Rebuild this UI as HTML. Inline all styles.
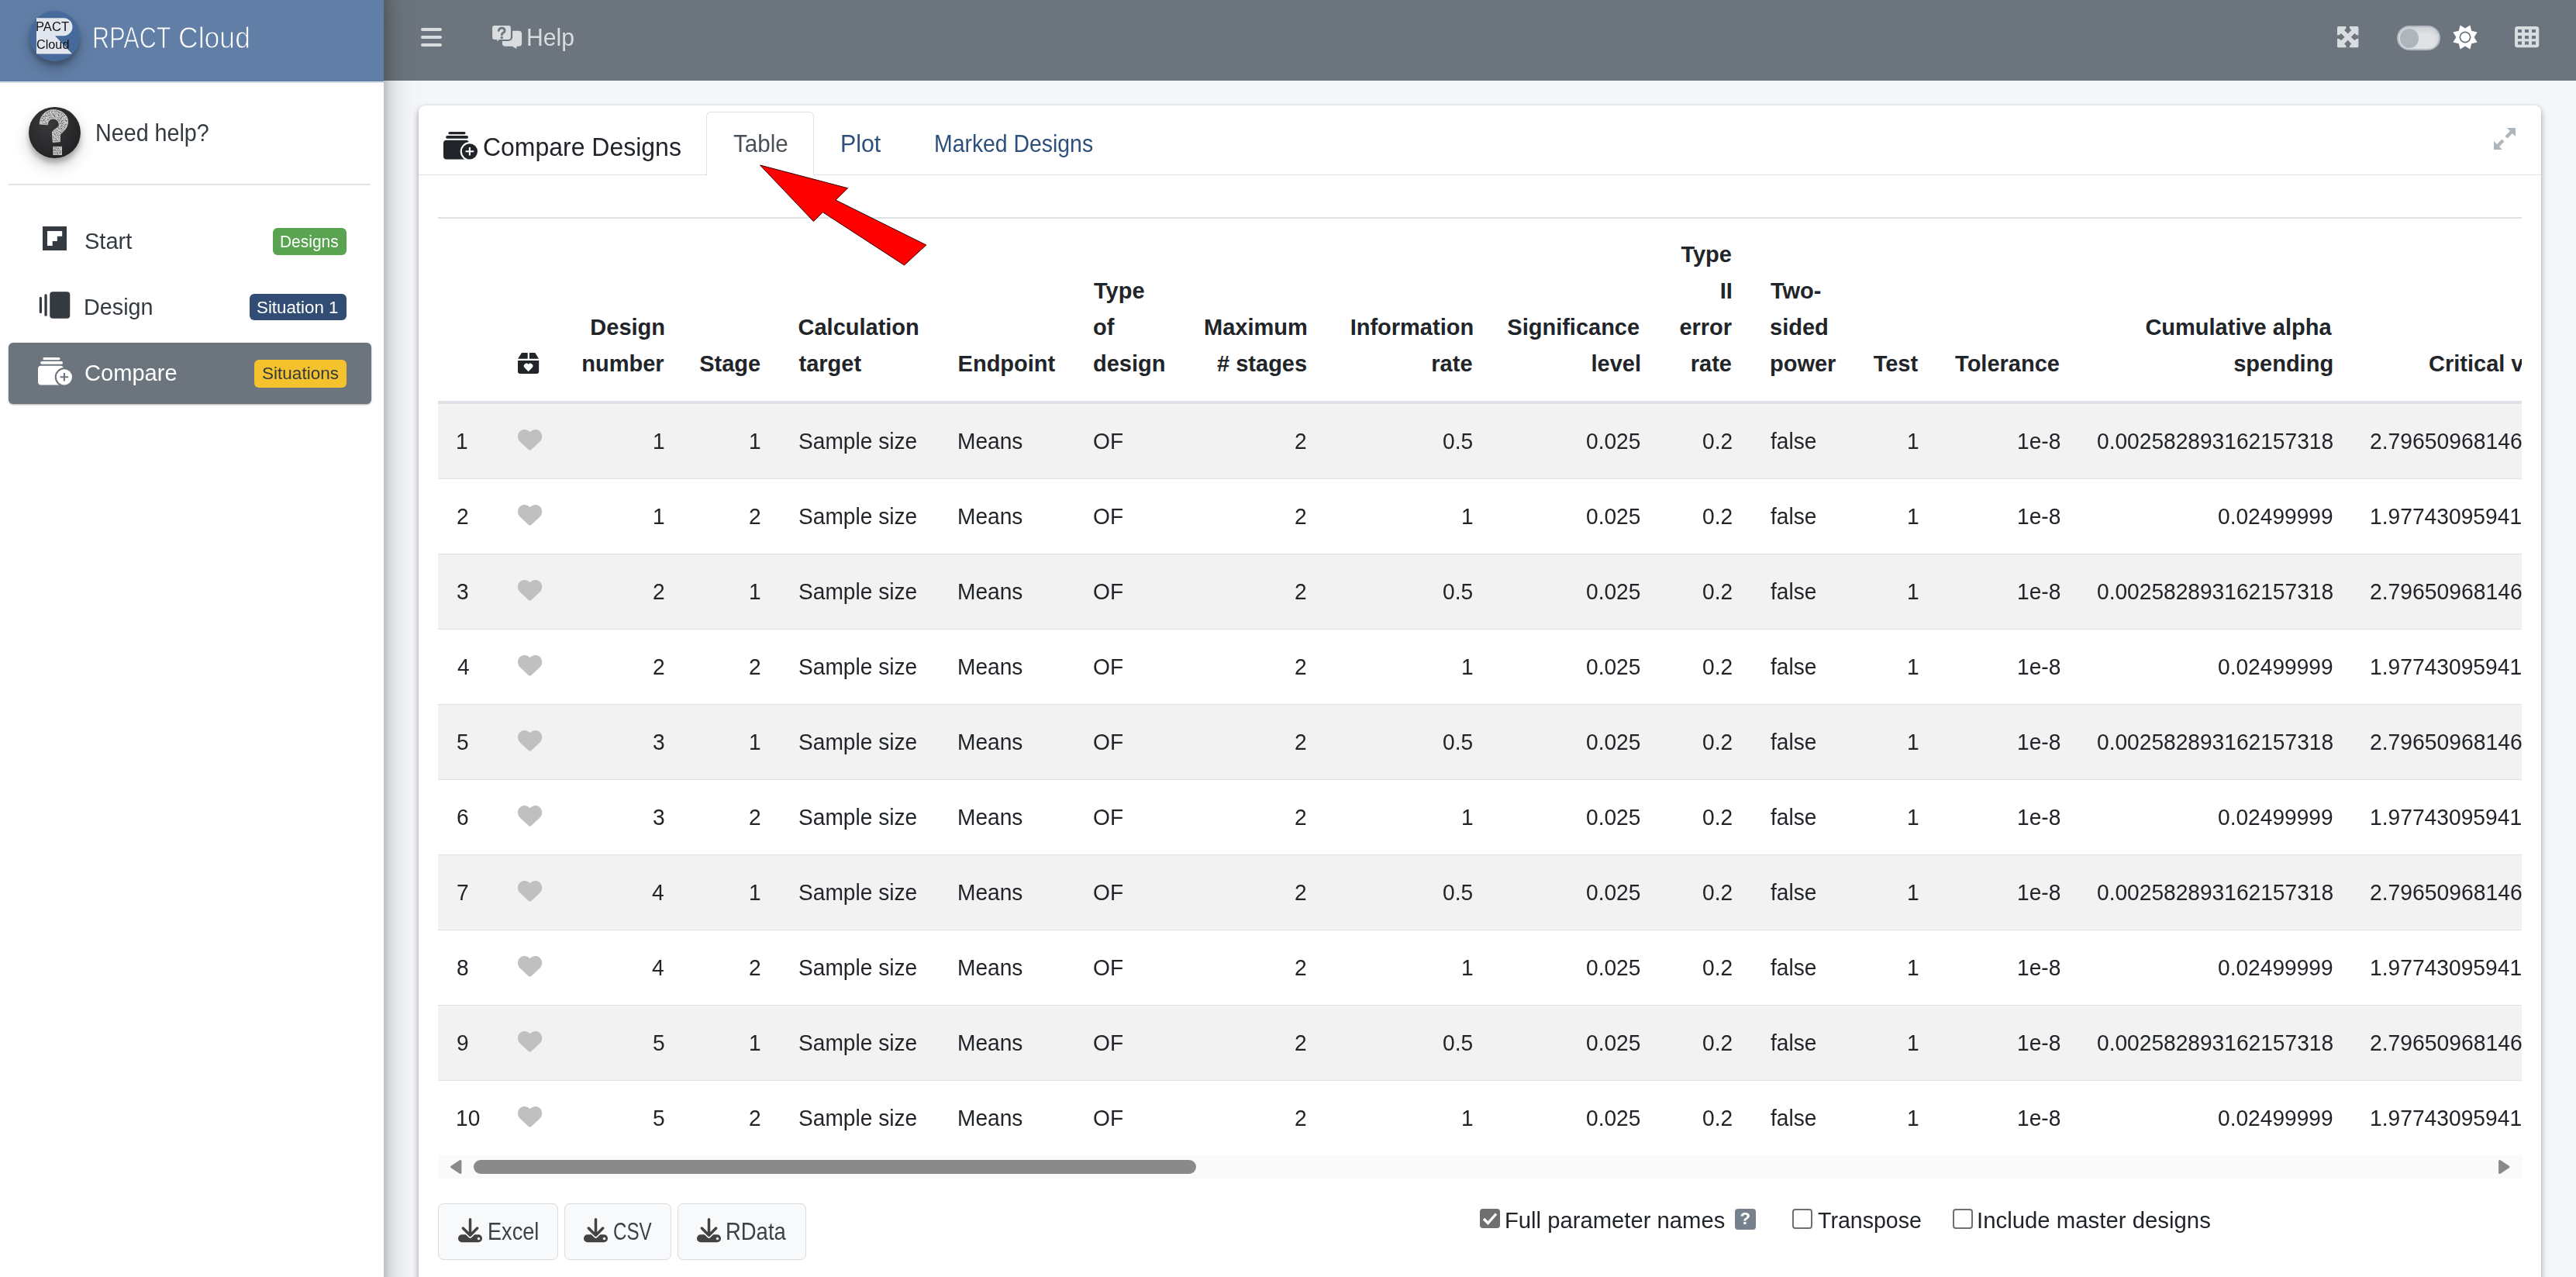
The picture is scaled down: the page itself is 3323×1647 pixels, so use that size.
<!DOCTYPE html>
<html><head><meta charset="utf-8"><title>RPACT Cloud</title>
<style>
html,body{margin:0;padding:0}
body{width:3323px;height:1647px;overflow:hidden;position:relative;background:#f4f6f9;font-family:"Liberation Sans",sans-serif}
.t{position:absolute;white-space:nowrap;line-height:1;transform-origin:0 0}
svg{overflow:visible}
</style></head><body>
<div style="position:absolute;left:495.00px;top:0.00px;width:2828.00px;height:104.00px;background:#6c757d"></div>
<div style="position:absolute;left:543.00px;top:36.00px;width:27.00px;height:4.00px;background:#dadddf;border-radius:2px"></div>
<div style="position:absolute;left:543.00px;top:45.80px;width:27.00px;height:4.00px;background:#dadddf;border-radius:2px"></div>
<div style="position:absolute;left:543.00px;top:55.60px;width:27.00px;height:4.00px;background:#dadddf;border-radius:2px"></div>
<svg style="position:absolute;left:630.00px;top:28.00px;" width="48" height="40" viewBox="0 0 48 40">
<path d="M22.8 11.8 h16.3 a4 4 0 0 1 4 4 v12 a4 4 0 0 1 -4 4 h-2.5 l-0.3 3.2 l-5.6 -3.2 h-8.8 a4 4 0 0 1 -4 -4 v-12 a4 4 0 0 1 4 -4z" fill="#dadddf"/>
<path d="M8 4 h18 a4 4 0 0 1 4 4 v12 a4 4 0 0 1 -4 4 h-11.5 l-4.5 4.3 l0.2 -4.3 h-2.2 a4 4 0 0 1 -4 -4 v-12 a4 4 0 0 1 4 -4z" fill="#dadddf" stroke="#6c757d" stroke-width="2.2"/>
<path d="M13.3 11.6 q0.5 -3.4 4 -3.4 q3.8 0 3.8 3.2 q0 2 -2.4 3.1 q-1.4 0.7 -1.4 2.6" fill="none" stroke="#6c757d" stroke-width="2.7" stroke-linecap="round"/>
<circle cx="17.3" cy="20.6" r="1.7" fill="#6c757d"/>
</svg>
<div class="t" style="left:679.03px;top:33.08px;font-size:30.5px;font-weight:400;color:#dadddf;transform:scaleX(0.9872);">Help</div>
<svg style="position:absolute;left:3015.00px;top:34.00px;" width="28" height="28" viewBox="0 0 28 28">
<rect x="0" y="0" width="27.4" height="27.3" rx="1.5" fill="#dadddf"/>
<g fill="#6c757d">
<polygon points="11.40,-0.20 16.00,-0.20 16.00,2.40 18.30,4.90 13.70,9.60 9.10,4.90 11.40,2.40"/>
<polygon points="27.55,11.35 27.55,15.95 24.95,15.95 22.45,18.25 17.75,13.65 22.45,9.05 24.95,11.35"/>
<polygon points="16.00,27.50 11.40,27.50 11.40,24.90 9.10,22.40 13.70,17.70 18.30,22.40 16.00,24.90"/>
<polygon points="-0.15,15.95 -0.15,11.35 2.45,11.35 4.95,9.05 9.65,13.65 4.95,18.25 2.45,15.95"/>
</g></svg>
<div style="position:absolute;left:3092.00px;top:33.00px;width:55.50px;height:32.00px;box-sizing:border-box;border:2px solid #b3b9bf;border-radius:16px;background:#e0e3e6;box-shadow:inset 0 4px 6px rgba(0,0,0,.09)"></div>
<div style="position:absolute;left:3095.50px;top:37.00px;width:24.50px;height:24.50px;border-radius:50%;background:#adb5bd"></div>
<svg style="position:absolute;left:3163.70px;top:31.70px;" width="32" height="32" viewBox="0 0 32 32"><polygon points="22.43,0.48 24.20,7.80 31.52,9.57 27.60,16.00 31.52,22.43 24.20,24.20 22.43,31.52 16.00,27.60 9.57,31.52 7.80,24.20 0.48,22.43 4.40,16.00 0.48,9.57 7.80,7.80 9.57,0.48 16.00,4.40" fill="#fff"/>
<circle cx="16" cy="16" r="6.6" fill="none" stroke="#6c757d" stroke-width="1.7"/></svg>
<svg style="position:absolute;left:3244.00px;top:34.00px;" width="32" height="28" viewBox="0 0 32 28"><rect x="0" y="0" width="31.3" height="27.3" rx="3.6" fill="#dadddf"/><rect x="4.0" y="4.0" width="5" height="4" fill="#6c757d"/><rect x="4.0" y="12.0" width="5" height="4" fill="#6c757d"/><rect x="4.0" y="19.5" width="5" height="4" fill="#6c757d"/><rect x="13.0" y="4.0" width="5" height="4" fill="#6c757d"/><rect x="13.0" y="12.0" width="5" height="4" fill="#6c757d"/><rect x="13.0" y="19.5" width="5" height="4" fill="#6c757d"/><rect x="22.0" y="4.0" width="5" height="4" fill="#6c757d"/><rect x="22.0" y="12.0" width="5" height="4" fill="#6c757d"/><rect x="22.0" y="19.5" width="5" height="4" fill="#6c757d"/></svg>
<div style="position:absolute;left:0.00px;top:-40.00px;width:495.00px;height:1740.00px;background:#fff;box-shadow:0 21px 42px rgba(0,0,0,.25),0 15px 15px rgba(0,0,0,.22)"></div>
<div style="position:absolute;left:0.00px;top:0.00px;width:495.00px;height:105.00px;background:#617ea7"></div>
<div style="position:absolute;left:0.00px;top:105.00px;width:495.00px;height:1.50px;background:#d9dee5"></div>
<div style="position:absolute;left:37.70px;top:13.50px;width:65.40px;height:65.40px;border-radius:50%;background:#476a9c;box-shadow:0 10px 20px rgba(0,0,0,.19),0 6px 6px rgba(0,0,0,.23)"></div>
<svg style="position:absolute;left:37.70px;top:13.50px;" width="66" height="66" viewBox="0 0 66 66"><path d="M9 9.2 H44 A11.5 11.5 0 0 1 44 32.2 H33 L55 55.5 H9 Z" fill="#e1e5ee"/></svg>
<div class="t" style="left:45.99px;top:26.06px;font-size:16.4px;font-weight:400;color:#111;transform:scaleX(1.0124);">PACT</div>
<div class="t" style="left:47.00px;top:49.36px;font-size:16.4px;font-weight:400;color:#111;transform:scaleX(0.9904);">Cloud</div>
<div class="t" style="left:119.18px;top:29.70px;font-size:38px;font-weight:400;color:#fff;transform:scaleX(0.8065);-webkit-text-stroke:0.9px #617ea7;">RPACT</div>
<div class="t" style="left:230.06px;top:29.70px;font-size:38px;font-weight:400;color:#fff;transform:scaleX(0.9360);-webkit-text-stroke:0.9px #617ea7;">Cloud</div>
<div style="position:absolute;left:37.10px;top:138.10px;width:66.50px;height:66.40px;border-radius:50%;background:radial-gradient(circle at 40% 35%,#3a3a3c,#242426 70%);box-shadow:0 10px 20px rgba(0,0,0,.19),0 6px 6px rgba(0,0,0,.23)"></div>
<svg style="position:absolute;left:37.10px;top:138.10px;" width="66.5" height="66.5" viewBox="0 0 66.5 66.5"><defs><filter id="chalk" x="0" y="0" width="100%" height="100%">
<feTurbulence type="fractalNoise" baseFrequency="0.8" numOctaves="2" seed="3" result="n"/>
<feColorMatrix in="n" type="matrix" values="0 0 0 0 0  0 0 0 0 0  0 0 0 0 0  0 0 0 -2.2 1.9" result="a"/>
<feComposite in="SourceGraphic" in2="a" operator="in"/>
</filter></defs>
<g filter="url(#chalk)" fill="#d4d4d4">
<path d="M14.3 22.1 C14 12 22 3.5 31.6 3.5 C42 3.5 50.6 10 50.6 18.6 C50.6 26 46 31 40.4 35.5 L40.4 44.7 L31.2 45.4 L30.5 32 C34 28 39.3 26 39.3 23.5 C39.3 18 35.5 15.1 31.6 15.1 C27 15.1 24.5 19 24.5 22.8 Z"/>
<rect x="31.9" y="51.4" width="10.6" height="10.2"/></g>
<g fill="none" stroke="#d8d8d8" stroke-width="0.9" opacity="0.9">
<path d="M14.3 22.1 C14 12 22 3.5 31.6 3.5 C42 3.5 50.6 10 50.6 18.6 C50.6 26 46 31 40.4 35.5 L40.4 44.7 L31.2 45.4 L30.5 32 C34 28 39.3 26 39.3 23.5 C39.3 18 35.5 15.1 31.6 15.1 C27 15.1 24.5 19 24.5 22.8 Z"/>
<rect x="31.9" y="51.4" width="10.6" height="10.2"/></g></svg>
<div class="t" style="left:123.12px;top:156.07px;font-size:30.5px;font-weight:400;color:#343a40;transform:scaleX(0.9409);">Need help?</div>
<div style="position:absolute;left:11.00px;top:237.00px;width:467.00px;height:2.00px;background:#e0e3e7"></div>
<svg style="position:absolute;left:55.00px;top:292.00px;" width="31" height="31" viewBox="0 0 31 31"><path d="M0 0H31V31H0Z M6 6 V25 H12.7 V19 H18.8 V12.7 H25.2 V6 Z" fill="#343a40" fill-rule="evenodd"/></svg>
<div class="t" style="left:109.03px;top:295.50px;font-size:30px;font-weight:400;color:#343a40;transform:scaleX(0.9680);">Start</div>
<div style="position:absolute;left:352.00px;top:294.20px;width:94.80px;height:34.50px;background:#5aa350;border-radius:6px"></div>
<div class="t" style="left:361.35px;top:300.60px;font-size:22px;font-weight:400;color:#fff;transform:scaleX(0.9518);">Designs</div>
<svg style="position:absolute;left:50.00px;top:376.00px;" width="41" height="35" viewBox="0 0 41 35"><rect x="14.2" y="0.2" width="26.1" height="34.6" rx="4" fill="#343a40"/>
<rect x="7.4" y="3.3" width="3.3" height="28.5" rx="1.6" fill="#343a40"/>
<rect x="0.8" y="6.8" width="3.2" height="21.4" rx="1.6" fill="#343a40"/></svg>
<div class="t" style="left:108.08px;top:380.50px;font-size:30px;font-weight:400;color:#343a40;transform:scaleX(0.9588);">Design</div>
<div style="position:absolute;left:322.10px;top:379.20px;width:124.70px;height:34.30px;background:#324d74;border-radius:6px"></div>
<div class="t" style="left:331.29px;top:386.00px;font-size:22px;font-weight:400;color:#fff;transform:scaleX(1.0143);">Situation 1</div>
<div style="position:absolute;left:11.00px;top:441.70px;width:468.00px;height:79.30px;background:#6c757d;border-radius:6px;box-shadow:0 1px 3px rgba(0,0,0,.12),0 1px 2px rgba(0,0,0,.24)"></div>
<svg style="position:absolute;left:48.60px;top:460.90px;" width="46" height="37" viewBox="0 0 46 37"><rect x="6.4" y="0" width="22.1" height="3.3" rx="1.6" fill="#fff"/>
<rect x="3.1" y="5.1" width="28.9" height="3.7" rx="1.8" fill="#fff"/>
<path d="M4 10.8 H29 A4 4 0 0 1 33 14.8 V35.4 H4 A4 4 0 0 1 0 31.4 V14.8 A4 4 0 0 1 4 10.8Z" fill="#fff"/>
<circle cx="33.9" cy="25.3" r="12.2" fill="#6c757d"/>
<circle cx="33.9" cy="25.3" r="10.1" fill="#fff"/>
<path d="M33.9 20 V30.6 M28.6 25.3 H39.2" stroke="#6c757d" stroke-width="2.1"/></svg>
<div class="t" style="left:109.03px;top:465.50px;font-size:30px;font-weight:400;color:#fff;transform:scaleX(0.9696);">Compare</div>
<div style="position:absolute;left:327.90px;top:464.20px;width:118.90px;height:35.60px;background:#f3c22d;border-radius:6px"></div>
<div class="t" style="left:337.98px;top:470.90px;font-size:22px;font-weight:400;color:#343a40;transform:scaleX(1.0249);">Situations</div>
<div style="position:absolute;left:540.00px;top:136.00px;width:2738.00px;height:1624.00px;background:#fff;border-radius:8px;box-shadow:0 0 1.5px rgba(0,0,0,.125),0 4.5px 9px rgba(0,0,0,.16),0 4.5px 9px rgba(0,0,0,.2)"></div>
<div style="position:absolute;left:540.00px;top:224.80px;width:2738.00px;height:1.70px;background:#dee2e6"></div>
<svg style="position:absolute;left:572.00px;top:170.10px;" width="46" height="37" viewBox="0 0 46 37"><rect x="6.4" y="0" width="22.1" height="3.3" rx="1.6" fill="#212529"/>
<rect x="3.1" y="5.1" width="28.9" height="3.7" rx="1.8" fill="#212529"/>
<path d="M4 10.8 H29 A4 4 0 0 1 33 14.8 V35.4 H4 A4 4 0 0 1 0 31.4 V14.8 A4 4 0 0 1 4 10.8Z" fill="#212529"/>
<circle cx="33.9" cy="25.3" r="12.2" fill="#fff"/>
<circle cx="33.9" cy="25.3" r="10.1" fill="#212529"/>
<path d="M33.9 20 V30.6 M28.6 25.3 H39.2" stroke="#fff" stroke-width="2.1"/></svg>
<div class="t" style="left:623.06px;top:171.70px;font-size:34px;font-weight:400;color:#212529;transform:scaleX(0.9403);">Compare Designs</div>
<div style="position:absolute;left:911.00px;top:144.20px;width:138.80px;height:82.30px;box-sizing:border-box;border:1.8px solid #dee2e6;border-bottom:none;border-radius:6px 6px 0 0;background:#fff"></div>
<div class="t" style="left:945.50px;top:170.07px;font-size:30.5px;font-weight:400;color:#495057;transform:scaleX(0.9687);">Table</div>
<div class="t" style="left:1083.81px;top:170.17px;font-size:30.5px;font-weight:400;color:#2c4f7c;transform:scaleX(0.9945);">Plot</div>
<div class="t" style="left:1205.04px;top:170.07px;font-size:30.5px;font-weight:400;color:#2c4f7c;transform:scaleX(0.9307);">Marked Designs</div>
<svg style="position:absolute;left:3217.00px;top:164.50px;" width="28" height="28" viewBox="0 0 28 28"><g fill="#adb5bd">
<path d="M28 0 V11 L24 7 L17.5 13.5 L14.5 10.5 L21 4 L17 0Z"/>
<path d="M0 28 V17 L4 21 L10.5 14.5 L13.5 17.5 L7 24 L11 28Z"/></g></svg>
<div style="position:absolute;left:565px;top:270px;width:2687.5px;height:1260px;overflow:hidden">
<div style="position:absolute;left:0.00px;top:9.80px;width:2835.00px;height:1.80px;background:#dee2e6"></div>
<svg style="position:absolute;left:103.00px;top:185.00px;" width="28" height="28" viewBox="0 0 28 28"><g fill="#212529">
<path d="M5 0.1 H12.7 V7.7 H0 Z"/>
<path d="M14.9 0.1 H22.3 L27 7.7 H14.9 Z"/>
<path d="M0 10 H27.2 V14 V14 V14 V24 A3 3 0 0 1 24.2 27 H3 A3 3 0 0 1 0 24 Z"/>
</g>
<path d="M13.6 24.2 L8.5 19 A3 3 0 0 1 13.6 15 A3 3 0 0 1 18.7 19 Z" fill="#fff"/></svg>
<div class="t" style="left:196.33px;top:137.75px;font-size:29px;font-weight:700;color:#212529;">Design</div>
<div class="t" style="left:185.24px;top:184.75px;font-size:29px;font-weight:700;color:#212529;">number</div>
<div class="t" style="left:337.16px;top:184.75px;font-size:29px;font-weight:700;color:#212529;">Stage</div>
<div class="t" style="left:464.50px;top:137.75px;font-size:29px;font-weight:700;color:#212529;">Calculation</div>
<div class="t" style="left:465.50px;top:184.75px;font-size:29px;font-weight:700;color:#212529;">target</div>
<div class="t" style="left:670.60px;top:184.75px;font-size:29px;font-weight:700;color:#212529;">Endpoint</div>
<div class="t" style="left:846.00px;top:90.95px;font-size:29px;font-weight:700;color:#212529;">Type</div>
<div class="t" style="left:845.00px;top:137.75px;font-size:29px;font-weight:700;color:#212529;">of</div>
<div class="t" style="left:845.00px;top:184.75px;font-size:29px;font-weight:700;color:#212529;">design</div>
<div class="t" style="left:988.03px;top:137.75px;font-size:29px;font-weight:700;color:#212529;">Maximum</div>
<div class="t" style="left:1005.06px;top:184.75px;font-size:29px;font-weight:700;color:#212529;"># stages</div>
<div class="t" style="left:1176.63px;top:137.75px;font-size:29px;font-weight:700;color:#212529;">Information</div>
<div class="t" style="left:1281.33px;top:184.75px;font-size:29px;font-weight:700;color:#212529;">rate</div>
<div class="t" style="left:1379.30px;top:137.75px;font-size:29px;font-weight:700;color:#212529;">Significance</div>
<div class="t" style="left:1487.56px;top:184.75px;font-size:29px;font-weight:700;color:#212529;">level</div>
<div class="t" style="left:1603.40px;top:44.15px;font-size:29px;font-weight:700;color:#212529;">Type</div>
<div class="t" style="left:1653.74px;top:90.95px;font-size:29px;font-weight:700;color:#212529;">II</div>
<div class="t" style="left:1601.39px;top:137.75px;font-size:29px;font-weight:700;color:#212529;">error</div>
<div class="t" style="left:1615.73px;top:184.75px;font-size:29px;font-weight:700;color:#212529;">rate</div>
<div class="t" style="left:1719.00px;top:90.95px;font-size:29px;font-weight:700;color:#212529;">Two-</div>
<div class="t" style="left:1718.00px;top:137.75px;font-size:29px;font-weight:700;color:#212529;">sided</div>
<div class="t" style="left:1718.00px;top:184.75px;font-size:29px;font-weight:700;color:#212529;">power</div>
<div class="t" style="left:1851.68px;top:184.75px;font-size:29px;font-weight:700;color:#212529;">Test</div>
<div class="t" style="left:1957.08px;top:184.75px;font-size:29px;font-weight:700;color:#212529;">Tolerance</div>
<div class="t" style="left:2202.41px;top:137.75px;font-size:29px;font-weight:700;color:#212529;">Cumulative alpha</div>
<div class="t" style="left:2316.23px;top:184.75px;font-size:29px;font-weight:700;color:#212529;">spending</div>
<div class="t" style="left:2568.00px;top:184.75px;font-size:29px;font-weight:700;color:#212529;">Critical values</div>
<div style="position:absolute;left:0.00px;top:250.50px;width:2835.00px;height:96.00px;background:#f2f2f2"></div>
<div style="position:absolute;left:0.00px;top:346.50px;width:2835.00px;height:1.00px;background:#dee2e6"></div>
<div class="t" style="left:23.06px;top:284.65px;font-size:29px;font-weight:400;color:#212529;transform:scaleX(0.9700);">1</div>
<svg style="position:absolute;left:103.00px;top:284.40px;" width="32" height="27" viewBox="0 0 32 27"><path transform="translate(0,-2.62) scale(0.0609)" d="M47.6 300.4L228.3 469.1c7.5 7 17.4 10.9 27.7 10.9s20.2-3.9 27.7-10.9L464.4 300.4c30.4-28.3 47.6-68 47.6-109.5v-5.8c0-69.900-50.5-129.5-119.4-141C347 36.5 300.6 51.4 268 84L256 96 244 84c-32.6-32.600-79-47.5-124.600-39.900C50.5 55.600 0 115.200 0 185.100v5.800c0 41.500 17.200 81.200 47.600 109.500z" fill="#c0c0c0"/></svg>
<div class="t" style="left:277.05px;top:284.65px;font-size:29px;font-weight:400;color:#212529;transform:scaleX(0.9700);">1</div>
<div class="t" style="left:401.25px;top:284.65px;font-size:29px;font-weight:400;color:#212529;transform:scaleX(0.9700);">1</div>
<div class="t" style="left:464.53px;top:284.65px;font-size:29px;font-weight:400;color:#212529;transform:scaleX(0.9700);">Sample size</div>
<div class="t" style="left:669.66px;top:284.65px;font-size:29px;font-weight:400;color:#212529;transform:scaleX(0.9700);">Means</div>
<div class="t" style="left:845.03px;top:284.65px;font-size:29px;font-weight:400;color:#212529;transform:scaleX(0.9700);">OF</div>
<div class="t" style="left:1105.45px;top:284.65px;font-size:29px;font-weight:400;color:#212529;transform:scaleX(0.9700);">2</div>
<div class="t" style="left:1296.39px;top:284.65px;font-size:29px;font-weight:400;color:#212529;transform:scaleX(0.9700);">0.5</div>
<div class="t" style="left:1480.90px;top:284.65px;font-size:29px;font-weight:400;color:#212529;transform:scaleX(0.9700);">0.025</div>
<div class="t" style="left:1630.79px;top:284.65px;font-size:29px;font-weight:400;color:#212529;transform:scaleX(0.9700);">0.2</div>
<div class="t" style="left:1719.00px;top:284.65px;font-size:29px;font-weight:400;color:#212529;transform:scaleX(0.9700);">false</div>
<div class="t" style="left:1894.95px;top:284.65px;font-size:29px;font-weight:400;color:#212529;transform:scaleX(0.9700);">1</div>
<div class="t" style="left:2036.59px;top:284.65px;font-size:29px;font-weight:400;color:#212529;transform:scaleX(0.9700);">1e-8</div>
<div class="t" style="left:2139.53px;top:284.65px;font-size:29px;font-weight:400;color:#212529;transform:scaleX(0.9700);">0.002582893162157318</div>
<div class="t" style="left:2491.62px;top:284.65px;font-size:29px;font-weight:400;color:#212529;transform:scaleX(0.9756);">2.79650968146</div>
<div style="position:absolute;left:0.00px;top:443.50px;width:2835.00px;height:1.00px;background:#dee2e6"></div>
<div class="t" style="left:24.03px;top:381.65px;font-size:29px;font-weight:400;color:#212529;transform:scaleX(0.9700);">2</div>
<svg style="position:absolute;left:103.00px;top:381.40px;" width="32" height="27" viewBox="0 0 32 27"><path transform="translate(0,-2.62) scale(0.0609)" d="M47.6 300.4L228.3 469.1c7.5 7 17.4 10.9 27.7 10.9s20.2-3.9 27.7-10.9L464.4 300.4c30.4-28.3 47.6-68 47.6-109.5v-5.8c0-69.900-50.5-129.5-119.4-141C347 36.5 300.6 51.4 268 84L256 96 244 84c-32.6-32.600-79-47.5-124.600-39.900C50.5 55.600 0 115.200 0 185.100v5.800c0 41.500 17.200 81.200 47.600 109.500z" fill="#c0c0c0"/></svg>
<div class="t" style="left:277.05px;top:381.65px;font-size:29px;font-weight:400;color:#212529;transform:scaleX(0.9700);">1</div>
<div class="t" style="left:401.25px;top:381.65px;font-size:29px;font-weight:400;color:#212529;transform:scaleX(0.9700);">2</div>
<div class="t" style="left:464.53px;top:381.65px;font-size:29px;font-weight:400;color:#212529;transform:scaleX(0.9700);">Sample size</div>
<div class="t" style="left:669.66px;top:381.65px;font-size:29px;font-weight:400;color:#212529;transform:scaleX(0.9700);">Means</div>
<div class="t" style="left:845.03px;top:381.65px;font-size:29px;font-weight:400;color:#212529;transform:scaleX(0.9700);">OF</div>
<div class="t" style="left:1105.45px;top:381.65px;font-size:29px;font-weight:400;color:#212529;transform:scaleX(0.9700);">2</div>
<div class="t" style="left:1319.85px;top:381.65px;font-size:29px;font-weight:400;color:#212529;transform:scaleX(0.9700);">1</div>
<div class="t" style="left:1480.90px;top:381.65px;font-size:29px;font-weight:400;color:#212529;transform:scaleX(0.9700);">0.025</div>
<div class="t" style="left:1630.79px;top:381.65px;font-size:29px;font-weight:400;color:#212529;transform:scaleX(0.9700);">0.2</div>
<div class="t" style="left:1719.00px;top:381.65px;font-size:29px;font-weight:400;color:#212529;transform:scaleX(0.9700);">false</div>
<div class="t" style="left:1894.95px;top:381.65px;font-size:29px;font-weight:400;color:#212529;transform:scaleX(0.9700);">1</div>
<div class="t" style="left:2036.59px;top:381.65px;font-size:29px;font-weight:400;color:#212529;transform:scaleX(0.9700);">1e-8</div>
<div class="t" style="left:2295.98px;top:381.65px;font-size:29px;font-weight:400;color:#212529;transform:scaleX(0.9700);">0.02499999</div>
<div class="t" style="left:2491.95px;top:381.65px;font-size:29px;font-weight:400;color:#212529;transform:scaleX(0.9729);">1.97743095941</div>
<div style="position:absolute;left:0.00px;top:444.50px;width:2835.00px;height:96.00px;background:#f2f2f2"></div>
<div style="position:absolute;left:0.00px;top:540.50px;width:2835.00px;height:1.00px;background:#dee2e6"></div>
<div class="t" style="left:24.03px;top:478.65px;font-size:29px;font-weight:400;color:#212529;transform:scaleX(0.9700);">3</div>
<svg style="position:absolute;left:103.00px;top:478.40px;" width="32" height="27" viewBox="0 0 32 27"><path transform="translate(0,-2.62) scale(0.0609)" d="M47.6 300.4L228.3 469.1c7.5 7 17.4 10.9 27.7 10.9s20.2-3.9 27.7-10.9L464.4 300.4c30.4-28.3 47.6-68 47.6-109.5v-5.8c0-69.900-50.5-129.5-119.4-141C347 36.5 300.6 51.4 268 84L256 96 244 84c-32.6-32.600-79-47.5-124.600-39.900C50.5 55.600 0 115.200 0 185.100v5.800c0 41.500 17.200 81.200 47.600 109.500z" fill="#c0c0c0"/></svg>
<div class="t" style="left:277.05px;top:478.65px;font-size:29px;font-weight:400;color:#212529;transform:scaleX(0.9700);">2</div>
<div class="t" style="left:401.25px;top:478.65px;font-size:29px;font-weight:400;color:#212529;transform:scaleX(0.9700);">1</div>
<div class="t" style="left:464.53px;top:478.65px;font-size:29px;font-weight:400;color:#212529;transform:scaleX(0.9700);">Sample size</div>
<div class="t" style="left:669.66px;top:478.65px;font-size:29px;font-weight:400;color:#212529;transform:scaleX(0.9700);">Means</div>
<div class="t" style="left:845.03px;top:478.65px;font-size:29px;font-weight:400;color:#212529;transform:scaleX(0.9700);">OF</div>
<div class="t" style="left:1105.45px;top:478.65px;font-size:29px;font-weight:400;color:#212529;transform:scaleX(0.9700);">2</div>
<div class="t" style="left:1296.39px;top:478.65px;font-size:29px;font-weight:400;color:#212529;transform:scaleX(0.9700);">0.5</div>
<div class="t" style="left:1480.90px;top:478.65px;font-size:29px;font-weight:400;color:#212529;transform:scaleX(0.9700);">0.025</div>
<div class="t" style="left:1630.79px;top:478.65px;font-size:29px;font-weight:400;color:#212529;transform:scaleX(0.9700);">0.2</div>
<div class="t" style="left:1719.00px;top:478.65px;font-size:29px;font-weight:400;color:#212529;transform:scaleX(0.9700);">false</div>
<div class="t" style="left:1894.95px;top:478.65px;font-size:29px;font-weight:400;color:#212529;transform:scaleX(0.9700);">1</div>
<div class="t" style="left:2036.59px;top:478.65px;font-size:29px;font-weight:400;color:#212529;transform:scaleX(0.9700);">1e-8</div>
<div class="t" style="left:2139.53px;top:478.65px;font-size:29px;font-weight:400;color:#212529;transform:scaleX(0.9700);">0.002582893162157318</div>
<div class="t" style="left:2491.62px;top:478.65px;font-size:29px;font-weight:400;color:#212529;transform:scaleX(0.9756);">2.79650968146</div>
<div style="position:absolute;left:0.00px;top:637.50px;width:2835.00px;height:1.00px;background:#dee2e6"></div>
<div class="t" style="left:25.00px;top:575.65px;font-size:29px;font-weight:400;color:#212529;transform:scaleX(0.9700);">4</div>
<svg style="position:absolute;left:103.00px;top:575.40px;" width="32" height="27" viewBox="0 0 32 27"><path transform="translate(0,-2.62) scale(0.0609)" d="M47.6 300.4L228.3 469.1c7.5 7 17.4 10.9 27.7 10.9s20.2-3.9 27.7-10.9L464.4 300.4c30.4-28.3 47.6-68 47.6-109.5v-5.8c0-69.900-50.5-129.5-119.4-141C347 36.5 300.6 51.4 268 84L256 96 244 84c-32.6-32.600-79-47.5-124.600-39.900C50.5 55.600 0 115.200 0 185.100v5.800c0 41.500 17.200 81.200 47.600 109.500z" fill="#c0c0c0"/></svg>
<div class="t" style="left:277.05px;top:575.65px;font-size:29px;font-weight:400;color:#212529;transform:scaleX(0.9700);">2</div>
<div class="t" style="left:401.25px;top:575.65px;font-size:29px;font-weight:400;color:#212529;transform:scaleX(0.9700);">2</div>
<div class="t" style="left:464.53px;top:575.65px;font-size:29px;font-weight:400;color:#212529;transform:scaleX(0.9700);">Sample size</div>
<div class="t" style="left:669.66px;top:575.65px;font-size:29px;font-weight:400;color:#212529;transform:scaleX(0.9700);">Means</div>
<div class="t" style="left:845.03px;top:575.65px;font-size:29px;font-weight:400;color:#212529;transform:scaleX(0.9700);">OF</div>
<div class="t" style="left:1105.45px;top:575.65px;font-size:29px;font-weight:400;color:#212529;transform:scaleX(0.9700);">2</div>
<div class="t" style="left:1319.85px;top:575.65px;font-size:29px;font-weight:400;color:#212529;transform:scaleX(0.9700);">1</div>
<div class="t" style="left:1480.90px;top:575.65px;font-size:29px;font-weight:400;color:#212529;transform:scaleX(0.9700);">0.025</div>
<div class="t" style="left:1630.79px;top:575.65px;font-size:29px;font-weight:400;color:#212529;transform:scaleX(0.9700);">0.2</div>
<div class="t" style="left:1719.00px;top:575.65px;font-size:29px;font-weight:400;color:#212529;transform:scaleX(0.9700);">false</div>
<div class="t" style="left:1894.95px;top:575.65px;font-size:29px;font-weight:400;color:#212529;transform:scaleX(0.9700);">1</div>
<div class="t" style="left:2036.59px;top:575.65px;font-size:29px;font-weight:400;color:#212529;transform:scaleX(0.9700);">1e-8</div>
<div class="t" style="left:2295.98px;top:575.65px;font-size:29px;font-weight:400;color:#212529;transform:scaleX(0.9700);">0.02499999</div>
<div class="t" style="left:2491.95px;top:575.65px;font-size:29px;font-weight:400;color:#212529;transform:scaleX(0.9729);">1.97743095941</div>
<div style="position:absolute;left:0.00px;top:638.50px;width:2835.00px;height:96.00px;background:#f2f2f2"></div>
<div style="position:absolute;left:0.00px;top:734.50px;width:2835.00px;height:1.00px;background:#dee2e6"></div>
<div class="t" style="left:24.03px;top:672.65px;font-size:29px;font-weight:400;color:#212529;transform:scaleX(0.9700);">5</div>
<svg style="position:absolute;left:103.00px;top:672.40px;" width="32" height="27" viewBox="0 0 32 27"><path transform="translate(0,-2.62) scale(0.0609)" d="M47.6 300.4L228.3 469.1c7.5 7 17.4 10.9 27.7 10.9s20.2-3.9 27.7-10.9L464.4 300.4c30.4-28.3 47.6-68 47.6-109.5v-5.8c0-69.900-50.5-129.5-119.4-141C347 36.5 300.6 51.4 268 84L256 96 244 84c-32.6-32.600-79-47.5-124.600-39.900C50.5 55.600 0 115.200 0 185.100v5.800c0 41.500 17.200 81.200 47.600 109.500z" fill="#c0c0c0"/></svg>
<div class="t" style="left:277.05px;top:672.65px;font-size:29px;font-weight:400;color:#212529;transform:scaleX(0.9700);">3</div>
<div class="t" style="left:401.25px;top:672.65px;font-size:29px;font-weight:400;color:#212529;transform:scaleX(0.9700);">1</div>
<div class="t" style="left:464.53px;top:672.65px;font-size:29px;font-weight:400;color:#212529;transform:scaleX(0.9700);">Sample size</div>
<div class="t" style="left:669.66px;top:672.65px;font-size:29px;font-weight:400;color:#212529;transform:scaleX(0.9700);">Means</div>
<div class="t" style="left:845.03px;top:672.65px;font-size:29px;font-weight:400;color:#212529;transform:scaleX(0.9700);">OF</div>
<div class="t" style="left:1105.45px;top:672.65px;font-size:29px;font-weight:400;color:#212529;transform:scaleX(0.9700);">2</div>
<div class="t" style="left:1296.39px;top:672.65px;font-size:29px;font-weight:400;color:#212529;transform:scaleX(0.9700);">0.5</div>
<div class="t" style="left:1480.90px;top:672.65px;font-size:29px;font-weight:400;color:#212529;transform:scaleX(0.9700);">0.025</div>
<div class="t" style="left:1630.79px;top:672.65px;font-size:29px;font-weight:400;color:#212529;transform:scaleX(0.9700);">0.2</div>
<div class="t" style="left:1719.00px;top:672.65px;font-size:29px;font-weight:400;color:#212529;transform:scaleX(0.9700);">false</div>
<div class="t" style="left:1894.95px;top:672.65px;font-size:29px;font-weight:400;color:#212529;transform:scaleX(0.9700);">1</div>
<div class="t" style="left:2036.59px;top:672.65px;font-size:29px;font-weight:400;color:#212529;transform:scaleX(0.9700);">1e-8</div>
<div class="t" style="left:2139.53px;top:672.65px;font-size:29px;font-weight:400;color:#212529;transform:scaleX(0.9700);">0.002582893162157318</div>
<div class="t" style="left:2491.62px;top:672.65px;font-size:29px;font-weight:400;color:#212529;transform:scaleX(0.9756);">2.79650968146</div>
<div style="position:absolute;left:0.00px;top:831.50px;width:2835.00px;height:1.00px;background:#dee2e6"></div>
<div class="t" style="left:24.03px;top:769.65px;font-size:29px;font-weight:400;color:#212529;transform:scaleX(0.9700);">6</div>
<svg style="position:absolute;left:103.00px;top:769.40px;" width="32" height="27" viewBox="0 0 32 27"><path transform="translate(0,-2.62) scale(0.0609)" d="M47.6 300.4L228.3 469.1c7.5 7 17.4 10.9 27.7 10.9s20.2-3.9 27.7-10.9L464.4 300.4c30.4-28.3 47.6-68 47.6-109.5v-5.8c0-69.900-50.5-129.5-119.4-141C347 36.5 300.6 51.4 268 84L256 96 244 84c-32.6-32.600-79-47.5-124.600-39.900C50.5 55.600 0 115.200 0 185.100v5.800c0 41.500 17.200 81.200 47.600 109.500z" fill="#c0c0c0"/></svg>
<div class="t" style="left:277.05px;top:769.65px;font-size:29px;font-weight:400;color:#212529;transform:scaleX(0.9700);">3</div>
<div class="t" style="left:401.25px;top:769.65px;font-size:29px;font-weight:400;color:#212529;transform:scaleX(0.9700);">2</div>
<div class="t" style="left:464.53px;top:769.65px;font-size:29px;font-weight:400;color:#212529;transform:scaleX(0.9700);">Sample size</div>
<div class="t" style="left:669.66px;top:769.65px;font-size:29px;font-weight:400;color:#212529;transform:scaleX(0.9700);">Means</div>
<div class="t" style="left:845.03px;top:769.65px;font-size:29px;font-weight:400;color:#212529;transform:scaleX(0.9700);">OF</div>
<div class="t" style="left:1105.45px;top:769.65px;font-size:29px;font-weight:400;color:#212529;transform:scaleX(0.9700);">2</div>
<div class="t" style="left:1319.85px;top:769.65px;font-size:29px;font-weight:400;color:#212529;transform:scaleX(0.9700);">1</div>
<div class="t" style="left:1480.90px;top:769.65px;font-size:29px;font-weight:400;color:#212529;transform:scaleX(0.9700);">0.025</div>
<div class="t" style="left:1630.79px;top:769.65px;font-size:29px;font-weight:400;color:#212529;transform:scaleX(0.9700);">0.2</div>
<div class="t" style="left:1719.00px;top:769.65px;font-size:29px;font-weight:400;color:#212529;transform:scaleX(0.9700);">false</div>
<div class="t" style="left:1894.95px;top:769.65px;font-size:29px;font-weight:400;color:#212529;transform:scaleX(0.9700);">1</div>
<div class="t" style="left:2036.59px;top:769.65px;font-size:29px;font-weight:400;color:#212529;transform:scaleX(0.9700);">1e-8</div>
<div class="t" style="left:2295.98px;top:769.65px;font-size:29px;font-weight:400;color:#212529;transform:scaleX(0.9700);">0.02499999</div>
<div class="t" style="left:2491.95px;top:769.65px;font-size:29px;font-weight:400;color:#212529;transform:scaleX(0.9729);">1.97743095941</div>
<div style="position:absolute;left:0.00px;top:832.50px;width:2835.00px;height:96.00px;background:#f2f2f2"></div>
<div style="position:absolute;left:0.00px;top:928.50px;width:2835.00px;height:1.00px;background:#dee2e6"></div>
<div class="t" style="left:24.03px;top:866.65px;font-size:29px;font-weight:400;color:#212529;transform:scaleX(0.9700);">7</div>
<svg style="position:absolute;left:103.00px;top:866.40px;" width="32" height="27" viewBox="0 0 32 27"><path transform="translate(0,-2.62) scale(0.0609)" d="M47.6 300.4L228.3 469.1c7.5 7 17.4 10.9 27.7 10.9s20.2-3.9 27.7-10.9L464.4 300.4c30.4-28.3 47.6-68 47.6-109.5v-5.8c0-69.900-50.5-129.5-119.4-141C347 36.5 300.6 51.4 268 84L256 96 244 84c-32.6-32.600-79-47.5-124.600-39.900C50.5 55.600 0 115.200 0 185.100v5.800c0 41.500 17.200 81.200 47.600 109.500z" fill="#c0c0c0"/></svg>
<div class="t" style="left:276.08px;top:866.65px;font-size:29px;font-weight:400;color:#212529;transform:scaleX(0.9700);">4</div>
<div class="t" style="left:401.25px;top:866.65px;font-size:29px;font-weight:400;color:#212529;transform:scaleX(0.9700);">1</div>
<div class="t" style="left:464.53px;top:866.65px;font-size:29px;font-weight:400;color:#212529;transform:scaleX(0.9700);">Sample size</div>
<div class="t" style="left:669.66px;top:866.65px;font-size:29px;font-weight:400;color:#212529;transform:scaleX(0.9700);">Means</div>
<div class="t" style="left:845.03px;top:866.65px;font-size:29px;font-weight:400;color:#212529;transform:scaleX(0.9700);">OF</div>
<div class="t" style="left:1105.45px;top:866.65px;font-size:29px;font-weight:400;color:#212529;transform:scaleX(0.9700);">2</div>
<div class="t" style="left:1296.39px;top:866.65px;font-size:29px;font-weight:400;color:#212529;transform:scaleX(0.9700);">0.5</div>
<div class="t" style="left:1480.90px;top:866.65px;font-size:29px;font-weight:400;color:#212529;transform:scaleX(0.9700);">0.025</div>
<div class="t" style="left:1630.79px;top:866.65px;font-size:29px;font-weight:400;color:#212529;transform:scaleX(0.9700);">0.2</div>
<div class="t" style="left:1719.00px;top:866.65px;font-size:29px;font-weight:400;color:#212529;transform:scaleX(0.9700);">false</div>
<div class="t" style="left:1894.95px;top:866.65px;font-size:29px;font-weight:400;color:#212529;transform:scaleX(0.9700);">1</div>
<div class="t" style="left:2036.59px;top:866.65px;font-size:29px;font-weight:400;color:#212529;transform:scaleX(0.9700);">1e-8</div>
<div class="t" style="left:2139.53px;top:866.65px;font-size:29px;font-weight:400;color:#212529;transform:scaleX(0.9700);">0.002582893162157318</div>
<div class="t" style="left:2491.62px;top:866.65px;font-size:29px;font-weight:400;color:#212529;transform:scaleX(0.9756);">2.79650968146</div>
<div style="position:absolute;left:0.00px;top:1025.50px;width:2835.00px;height:1.00px;background:#dee2e6"></div>
<div class="t" style="left:24.03px;top:963.65px;font-size:29px;font-weight:400;color:#212529;transform:scaleX(0.9700);">8</div>
<svg style="position:absolute;left:103.00px;top:963.40px;" width="32" height="27" viewBox="0 0 32 27"><path transform="translate(0,-2.62) scale(0.0609)" d="M47.6 300.4L228.3 469.1c7.5 7 17.4 10.9 27.7 10.9s20.2-3.9 27.7-10.9L464.4 300.4c30.4-28.3 47.6-68 47.6-109.5v-5.8c0-69.900-50.5-129.5-119.4-141C347 36.5 300.6 51.4 268 84L256 96 244 84c-32.6-32.600-79-47.5-124.600-39.900C50.5 55.600 0 115.200 0 185.100v5.800c0 41.500 17.200 81.200 47.600 109.500z" fill="#c0c0c0"/></svg>
<div class="t" style="left:276.08px;top:963.65px;font-size:29px;font-weight:400;color:#212529;transform:scaleX(0.9700);">4</div>
<div class="t" style="left:401.25px;top:963.65px;font-size:29px;font-weight:400;color:#212529;transform:scaleX(0.9700);">2</div>
<div class="t" style="left:464.53px;top:963.65px;font-size:29px;font-weight:400;color:#212529;transform:scaleX(0.9700);">Sample size</div>
<div class="t" style="left:669.66px;top:963.65px;font-size:29px;font-weight:400;color:#212529;transform:scaleX(0.9700);">Means</div>
<div class="t" style="left:845.03px;top:963.65px;font-size:29px;font-weight:400;color:#212529;transform:scaleX(0.9700);">OF</div>
<div class="t" style="left:1105.45px;top:963.65px;font-size:29px;font-weight:400;color:#212529;transform:scaleX(0.9700);">2</div>
<div class="t" style="left:1319.85px;top:963.65px;font-size:29px;font-weight:400;color:#212529;transform:scaleX(0.9700);">1</div>
<div class="t" style="left:1480.90px;top:963.65px;font-size:29px;font-weight:400;color:#212529;transform:scaleX(0.9700);">0.025</div>
<div class="t" style="left:1630.79px;top:963.65px;font-size:29px;font-weight:400;color:#212529;transform:scaleX(0.9700);">0.2</div>
<div class="t" style="left:1719.00px;top:963.65px;font-size:29px;font-weight:400;color:#212529;transform:scaleX(0.9700);">false</div>
<div class="t" style="left:1894.95px;top:963.65px;font-size:29px;font-weight:400;color:#212529;transform:scaleX(0.9700);">1</div>
<div class="t" style="left:2036.59px;top:963.65px;font-size:29px;font-weight:400;color:#212529;transform:scaleX(0.9700);">1e-8</div>
<div class="t" style="left:2295.98px;top:963.65px;font-size:29px;font-weight:400;color:#212529;transform:scaleX(0.9700);">0.02499999</div>
<div class="t" style="left:2491.95px;top:963.65px;font-size:29px;font-weight:400;color:#212529;transform:scaleX(0.9729);">1.97743095941</div>
<div style="position:absolute;left:0.00px;top:1026.50px;width:2835.00px;height:96.00px;background:#f2f2f2"></div>
<div style="position:absolute;left:0.00px;top:1122.50px;width:2835.00px;height:1.00px;background:#dee2e6"></div>
<div class="t" style="left:24.03px;top:1060.65px;font-size:29px;font-weight:400;color:#212529;transform:scaleX(0.9700);">9</div>
<svg style="position:absolute;left:103.00px;top:1060.40px;" width="32" height="27" viewBox="0 0 32 27"><path transform="translate(0,-2.62) scale(0.0609)" d="M47.6 300.4L228.3 469.1c7.5 7 17.4 10.9 27.7 10.9s20.2-3.9 27.7-10.9L464.4 300.4c30.4-28.3 47.6-68 47.6-109.5v-5.8c0-69.900-50.5-129.5-119.4-141C347 36.5 300.6 51.4 268 84L256 96 244 84c-32.6-32.600-79-47.5-124.600-39.900C50.5 55.600 0 115.200 0 185.100v5.800c0 41.500 17.200 81.200 47.600 109.500z" fill="#c0c0c0"/></svg>
<div class="t" style="left:277.05px;top:1060.65px;font-size:29px;font-weight:400;color:#212529;transform:scaleX(0.9700);">5</div>
<div class="t" style="left:401.25px;top:1060.65px;font-size:29px;font-weight:400;color:#212529;transform:scaleX(0.9700);">1</div>
<div class="t" style="left:464.53px;top:1060.65px;font-size:29px;font-weight:400;color:#212529;transform:scaleX(0.9700);">Sample size</div>
<div class="t" style="left:669.66px;top:1060.65px;font-size:29px;font-weight:400;color:#212529;transform:scaleX(0.9700);">Means</div>
<div class="t" style="left:845.03px;top:1060.65px;font-size:29px;font-weight:400;color:#212529;transform:scaleX(0.9700);">OF</div>
<div class="t" style="left:1105.45px;top:1060.65px;font-size:29px;font-weight:400;color:#212529;transform:scaleX(0.9700);">2</div>
<div class="t" style="left:1296.39px;top:1060.65px;font-size:29px;font-weight:400;color:#212529;transform:scaleX(0.9700);">0.5</div>
<div class="t" style="left:1480.90px;top:1060.65px;font-size:29px;font-weight:400;color:#212529;transform:scaleX(0.9700);">0.025</div>
<div class="t" style="left:1630.79px;top:1060.65px;font-size:29px;font-weight:400;color:#212529;transform:scaleX(0.9700);">0.2</div>
<div class="t" style="left:1719.00px;top:1060.65px;font-size:29px;font-weight:400;color:#212529;transform:scaleX(0.9700);">false</div>
<div class="t" style="left:1894.95px;top:1060.65px;font-size:29px;font-weight:400;color:#212529;transform:scaleX(0.9700);">1</div>
<div class="t" style="left:2036.59px;top:1060.65px;font-size:29px;font-weight:400;color:#212529;transform:scaleX(0.9700);">1e-8</div>
<div class="t" style="left:2139.53px;top:1060.65px;font-size:29px;font-weight:400;color:#212529;transform:scaleX(0.9700);">0.002582893162157318</div>
<div class="t" style="left:2491.62px;top:1060.65px;font-size:29px;font-weight:400;color:#212529;transform:scaleX(0.9756);">2.79650968146</div>
<div class="t" style="left:23.06px;top:1157.65px;font-size:29px;font-weight:400;color:#212529;transform:scaleX(0.9700);">10</div>
<svg style="position:absolute;left:103.00px;top:1157.40px;" width="32" height="27" viewBox="0 0 32 27"><path transform="translate(0,-2.62) scale(0.0609)" d="M47.6 300.4L228.3 469.1c7.5 7 17.4 10.9 27.7 10.9s20.2-3.9 27.7-10.9L464.4 300.4c30.4-28.3 47.6-68 47.6-109.5v-5.8c0-69.900-50.5-129.5-119.4-141C347 36.5 300.6 51.4 268 84L256 96 244 84c-32.6-32.600-79-47.5-124.600-39.900C50.5 55.600 0 115.200 0 185.100v5.800c0 41.500 17.200 81.200 47.600 109.500z" fill="#c0c0c0"/></svg>
<div class="t" style="left:277.05px;top:1157.65px;font-size:29px;font-weight:400;color:#212529;transform:scaleX(0.9700);">5</div>
<div class="t" style="left:401.25px;top:1157.65px;font-size:29px;font-weight:400;color:#212529;transform:scaleX(0.9700);">2</div>
<div class="t" style="left:464.53px;top:1157.65px;font-size:29px;font-weight:400;color:#212529;transform:scaleX(0.9700);">Sample size</div>
<div class="t" style="left:669.66px;top:1157.65px;font-size:29px;font-weight:400;color:#212529;transform:scaleX(0.9700);">Means</div>
<div class="t" style="left:845.03px;top:1157.65px;font-size:29px;font-weight:400;color:#212529;transform:scaleX(0.9700);">OF</div>
<div class="t" style="left:1105.45px;top:1157.65px;font-size:29px;font-weight:400;color:#212529;transform:scaleX(0.9700);">2</div>
<div class="t" style="left:1319.85px;top:1157.65px;font-size:29px;font-weight:400;color:#212529;transform:scaleX(0.9700);">1</div>
<div class="t" style="left:1480.90px;top:1157.65px;font-size:29px;font-weight:400;color:#212529;transform:scaleX(0.9700);">0.025</div>
<div class="t" style="left:1630.79px;top:1157.65px;font-size:29px;font-weight:400;color:#212529;transform:scaleX(0.9700);">0.2</div>
<div class="t" style="left:1719.00px;top:1157.65px;font-size:29px;font-weight:400;color:#212529;transform:scaleX(0.9700);">false</div>
<div class="t" style="left:1894.95px;top:1157.65px;font-size:29px;font-weight:400;color:#212529;transform:scaleX(0.9700);">1</div>
<div class="t" style="left:2036.59px;top:1157.65px;font-size:29px;font-weight:400;color:#212529;transform:scaleX(0.9700);">1e-8</div>
<div class="t" style="left:2295.98px;top:1157.65px;font-size:29px;font-weight:400;color:#212529;transform:scaleX(0.9700);">0.02499999</div>
<div class="t" style="left:2491.95px;top:1157.65px;font-size:29px;font-weight:400;color:#212529;transform:scaleX(0.9729);">1.97743095941</div>
<div style="position:absolute;left:0.00px;top:247.10px;width:2835.00px;height:3.90px;background:#dee2e6"></div>
<div style="position:absolute;left:0.00px;top:1220.00px;width:2687.50px;height:30.00px;background:#fafafa"></div>
<div style="position:absolute;left:46.00px;top:1225.70px;width:931.70px;height:18.00px;background:#8a8a8a;border-radius:9px"></div>
<svg style="position:absolute;left:15.80px;top:1226.00px;" width="15" height="18" viewBox="0 0 15 18"><path d="M12.9 1.6 V16.4 L1.6 9 Z" fill="#8a8a8a" stroke="#8a8a8a" stroke-width="3" stroke-linejoin="round"/></svg>
<svg style="position:absolute;left:2657.80px;top:1226.00px;" width="15" height="18" viewBox="0 0 15 18"><path d="M1.6 1.6 V16.4 L12.9 9 Z" fill="#8a8a8a" stroke="#8a8a8a" stroke-width="3" stroke-linejoin="round"/></svg>
</div>
<div style="position:absolute;left:565.30px;top:1551.70px;width:154.70px;height:73.70px;box-sizing:border-box;background:#f8f9fa;border:1.5px solid #d9dbdd;border-radius:7px"></div>
<svg style="position:absolute;left:591.00px;top:1571.00px;" width="32" height="32" viewBox="0 0 32 32"><path d="M4.8 21.3 H10 L15.5 26 L21 21.3 H26.2 A4.8 4.8 0 0 1 31 26.1 V26.4 A4.8 4.8 0 0 1 26.2 31.2 H4.8 A4.8 4.8 0 0 1 0 26.4 V26.1 A4.8 4.8 0 0 1 4.8 21.3Z" fill="#434343"/>
<g fill="none" stroke-linecap="round" stroke-linejoin="round">
<path d="M15.5 1.7 V20 M6.3 13 L15.5 22.2 L24.7 13" stroke="#f8f9fa" stroke-width="6.6"/>
<path d="M15.5 1.7 V20 M6.3 13 L15.5 22.2 L24.7 13" stroke="#434343" stroke-width="3.5"/></g>
<circle cx="26.5" cy="26.5" r="1.7" fill="#f8f9fa"/></svg>
<div class="t" style="left:628.72px;top:1572.88px;font-size:30.5px;font-weight:400;color:#3d4146;transform:scaleX(0.8898);">Excel</div>
<div style="position:absolute;left:727.50px;top:1551.70px;width:138.50px;height:73.70px;box-sizing:border-box;background:#f8f9fa;border:1.5px solid #d9dbdd;border-radius:7px"></div>
<svg style="position:absolute;left:753.20px;top:1571.00px;" width="32" height="32" viewBox="0 0 32 32"><path d="M4.8 21.3 H10 L15.5 26 L21 21.3 H26.2 A4.8 4.8 0 0 1 31 26.1 V26.4 A4.8 4.8 0 0 1 26.2 31.2 H4.8 A4.8 4.8 0 0 1 0 26.4 V26.1 A4.8 4.8 0 0 1 4.8 21.3Z" fill="#434343"/>
<g fill="none" stroke-linecap="round" stroke-linejoin="round">
<path d="M15.5 1.7 V20 M6.3 13 L15.5 22.2 L24.7 13" stroke="#f8f9fa" stroke-width="6.6"/>
<path d="M15.5 1.7 V20 M6.3 13 L15.5 22.2 L24.7 13" stroke="#434343" stroke-width="3.5"/></g>
<circle cx="26.5" cy="26.5" r="1.7" fill="#f8f9fa"/></svg>
<div class="t" style="left:790.61px;top:1572.88px;font-size:30.5px;font-weight:400;color:#3d4146;transform:scaleX(0.7921);">CSV</div>
<div style="position:absolute;left:873.70px;top:1551.70px;width:166.80px;height:73.70px;box-sizing:border-box;background:#f8f9fa;border:1.5px solid #d9dbdd;border-radius:7px"></div>
<svg style="position:absolute;left:899.40px;top:1571.00px;" width="32" height="32" viewBox="0 0 32 32"><path d="M4.8 21.3 H10 L15.5 26 L21 21.3 H26.2 A4.8 4.8 0 0 1 31 26.1 V26.4 A4.8 4.8 0 0 1 26.2 31.2 H4.8 A4.8 4.8 0 0 1 0 26.4 V26.1 A4.8 4.8 0 0 1 4.8 21.3Z" fill="#434343"/>
<g fill="none" stroke-linecap="round" stroke-linejoin="round">
<path d="M15.5 1.7 V20 M6.3 13 L15.5 22.2 L24.7 13" stroke="#f8f9fa" stroke-width="6.6"/>
<path d="M15.5 1.7 V20 M6.3 13 L15.5 22.2 L24.7 13" stroke="#434343" stroke-width="3.5"/></g>
<circle cx="26.5" cy="26.5" r="1.7" fill="#f8f9fa"/></svg>
<div class="t" style="left:936.20px;top:1572.88px;font-size:30.5px;font-weight:400;color:#3d4146;transform:scaleX(0.8995);">RData</div>
<div style="position:absolute;left:1909.10px;top:1559.20px;width:26.00px;height:25.30px;background:#6f6f6f;border-radius:4px"></div>
<svg style="position:absolute;left:1909.10px;top:1559.20px;" width="26" height="25.3" viewBox="0 0 26 25.3"><path d="M5 13 L10.5 18.5 L21 6.5" fill="none" stroke="#fff" stroke-width="3.4"/></svg>
<div class="t" style="left:1941.48px;top:1559.65px;font-size:29px;font-weight:400;color:#212529;transform:scaleX(1.0080);">Full parameter names</div>
<div style="position:absolute;left:2237.80px;top:1559.20px;width:27.30px;height:26.80px;background:#76818d;border-radius:4px"></div>
<div class="t" style="left:2244.50px;top:1561.30px;font-size:22px;font-weight:700;color:#fff;">?</div>
<div style="position:absolute;left:2312.00px;top:1558.80px;width:26.00px;height:26.00px;box-sizing:border-box;border:2px solid #6f6f6f;border-radius:4px;background:#fff"></div>
<div class="t" style="left:2345.00px;top:1559.65px;font-size:29px;font-weight:400;color:#212529;transform:scaleX(0.9851);">Transpose</div>
<div style="position:absolute;left:2519.40px;top:1558.80px;width:25.20px;height:26.00px;box-sizing:border-box;border:2px solid #6f6f6f;border-radius:4px;background:#fff"></div>
<div class="t" style="left:2549.98px;top:1559.65px;font-size:29px;font-weight:400;color:#212529;transform:scaleX(1.0121);">Include master designs</div>
<svg style="position:absolute;left:0.00px;top:0.00px;pointer-events:none" width="3323" height="1647" viewBox="0 0 3323 1647"><polygon points="980.5,213 1093.6,242.7 1078,258 1194.8,316 1166.5,342 1061.4,273.7 1049.5,285.6" fill="#ff0000" stroke="#330000" stroke-width="1"/></svg>
</body></html>
